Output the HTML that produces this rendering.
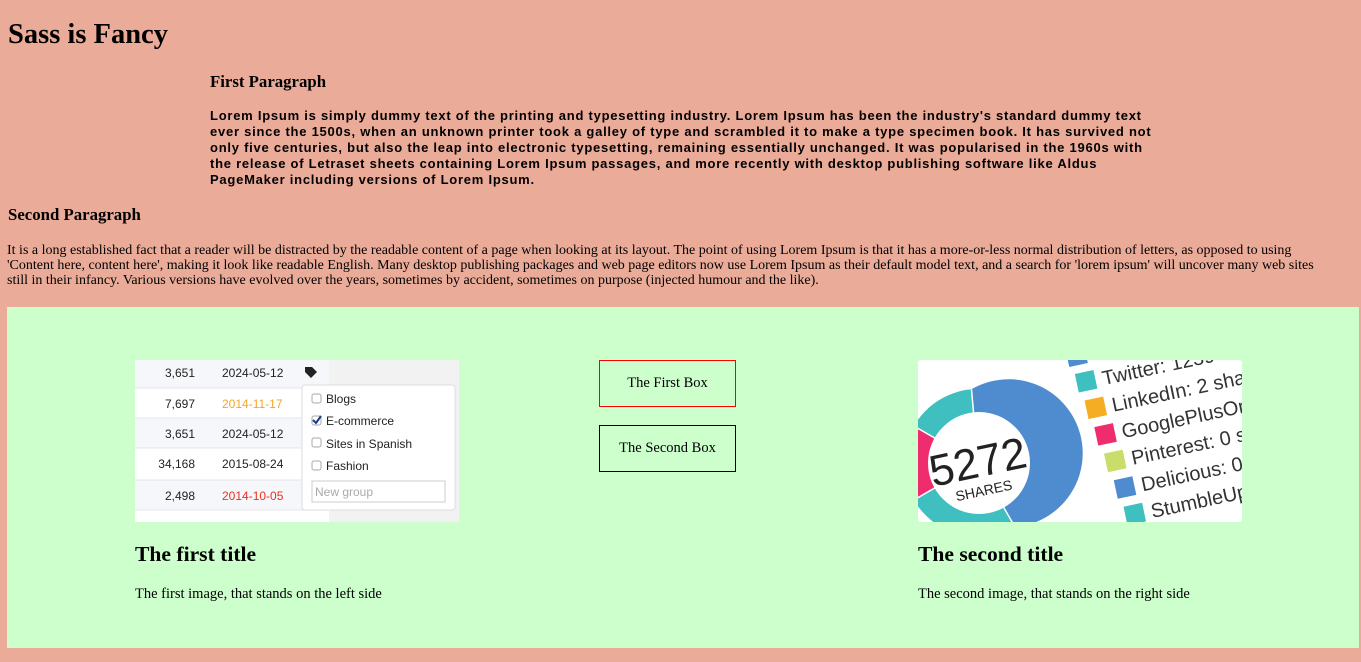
<!DOCTYPE html>
<html><head><meta charset="utf-8"><style>
*{margin:0;padding:0;box-sizing:border-box}
body{width:1361px;height:662px;background:#eaab98;font-family:"Liberation Serif",serif;position:relative;overflow:hidden;color:#000}
.a{position:absolute}
h1{font-size:28.5px;left:8px;top:19px}
h3{font-size:16.8px}
.p1{left:210px;top:108px;width:955px;font:bold 13px/16px "Liberation Sans",sans-serif;letter-spacing:0.75px}
.p2{left:7px;top:243px;width:1352px;font-size:14px;line-height:15px;white-space:nowrap}
.green{left:7px;top:307px;width:1352px;height:341px;background:#ccffcc}
.box{width:137px;height:47px;border:1px solid;font-size:14.5px;display:flex;align-items:center;justify-content:center;left:599px}
h2{font-size:21.6px}
.cap{font-size:14.5px}
</style></head><body>
<h1 class="a">Sass is Fancy</h1>
<h3 class="a" style="left:210px;top:72px">First Paragraph</h3>
<div class="a p1">Lorem Ipsum is simply dummy text of the printing and typesetting industry. Lorem Ipsum has been the industry's standard dummy text ever since the 1500s, when an unknown printer took a galley of type and scrambled it to make a type specimen book. It has survived not only five centuries, but also the leap into electronic typesetting, remaining essentially unchanged. It was popularised in the 1960s with the release of Letraset sheets containing Lorem Ipsum passages, and more recently with desktop publishing software like Aldus PageMaker including versions of Lorem Ipsum.</div>
<h3 class="a" style="left:8px;top:205px">Second Paragraph</h3>
<div class="a p2">It is a long established fact that a reader will be distracted by the readable content of a page when looking at its layout. The point of using Lorem Ipsum is that it has a more-or-less normal distribution of letters, as opposed to using<br>'Content here, content here', making it look like readable English. Many desktop publishing packages and web page editors now use Lorem Ipsum as their default model text, and a search for 'lorem ipsum' will uncover many web sites<br>still in their infancy. Various versions have evolved over the years, sometimes by accident, sometimes on purpose (injected humour and the like).</div>
<div class="a green"></div>

<svg class="a" style="left:135px;top:360px" width="324" height="162" viewBox="0 0 324 162" font-family="Liberation Sans,sans-serif" font-size="12">
<rect width="324" height="162" fill="#fff"/>
<rect width="194" height="28" fill="#f6f7fa"/>
<rect y="58" width="194" height="30" fill="#f6f7fa"/>
<rect y="120" width="194" height="30" fill="#f6f7fa"/>
<rect x="194" width="130" height="162" fill="#f2f2f2"/>
<g stroke="#e6e6ea"><line x1="0" y1="28" x2="194" y2="28"/><line x1="0" y1="58" x2="194" y2="58"/><line x1="0" y1="88" x2="194" y2="88"/><line x1="0" y1="120" x2="194" y2="120"/><line x1="0" y1="150" x2="194" y2="150"/></g>
<g fill="#222" text-anchor="end"><text x="60" y="17">3,651</text><text x="60" y="48">7,697</text><text x="60" y="78">3,651</text><text x="60" y="108">34,168</text><text x="60" y="140">2,498</text></g>
<text x="87" y="17" fill="#222">2024-05-12</text><text x="87" y="48" fill="#f5a623">2014-11-17</text><text x="87" y="78" fill="#222">2024-05-12</text><text x="87" y="108" fill="#222">2015-08-24</text><text x="87" y="140" fill="#e8321e">2014-10-05</text>
<path d="M170 7h7l5 5-6 6-6-6z" fill="#222"/>
<rect x="167" y="25" width="153" height="125" rx="3" fill="#fff" stroke="#ddd"/>
<g fill="#fff" stroke="#aaa"><rect x="177" y="34" width="9" height="9" rx="2"/><rect x="177" y="56" width="9" height="9" rx="2"/><rect x="177" y="78" width="9" height="9" rx="2"/><rect x="177" y="101" width="9" height="9" rx="2"/></g>
<path d="M178 60l3 3 5-7" stroke="#1a3a8a" stroke-width="2" fill="none"/>
<g fill="#222"><text x="191" y="43">Blogs</text><text x="191" y="65">E-commerce</text><text x="191" y="88">Sites in Spanish</text><text x="191" y="110">Fashion</text></g>
<rect x="177" y="121" width="133" height="21" fill="#fff" stroke="#ccc"/>
<text x="180" y="136" fill="#aaa">New group</text>
</svg>

<div class="a box" style="top:360px;border-color:#f00">The First Box</div>
<div class="a box" style="top:425px;border-color:#000">The Second Box</div>

<svg class="a" style="left:918px;top:360px" width="324" height="162" viewBox="0 0 324 162" font-family="Liberation Sans,sans-serif">
<defs><clipPath id="c"><rect width="324" height="162" rx="3"/></clipPath></defs>
<g clip-path="url(#c)">
<rect width="324" height="162" fill="#fff"/>
<path d="M60 103 L53.5 29.3 A74 74 0 1 1 97 167 Z" fill="#4e8bcf"/>
<path d="M60 103 L97 167 A74 74 0 0 1 -4.1 140 Z" fill="#3fbfbf"/>
<path d="M60 103 L-4.1 140 A74 74 0 0 1 -4.1 66 Z" fill="#ef2d6e"/>
<path d="M60 103 L-4.1 66 A74 74 0 0 1 53.5 29.3 Z" fill="#3fbfbf"/>
<g stroke="#fff" stroke-width="1.5"><line x1="60" y1="103" x2="53.5" y2="29.3"/><line x1="60" y1="103" x2="97" y2="167"/><line x1="60" y1="103" x2="-4.1" y2="140"/><line x1="60" y1="103" x2="-4.1" y2="66"/></g>
<circle cx="61" cy="103" r="51" fill="#fff"/>
<g transform="rotate(-12 60 103)"><text x="60" y="117" font-size="44" text-anchor="middle" fill="#222">5272</text><text x="60" y="136" font-size="14" text-anchor="middle" fill="#222">SHARES</text></g>
<g transform="rotate(-12 160 0)" font-size="20" fill="#333">
<rect x="150" y="-14" width="19" height="19" fill="#4e8bcf"/>
<rect x="154" y="13" width="19" height="19" fill="#3fbfbf"/><text x="180" y="30">Twitter: 1239</text>
<rect x="158" y="41" width="19" height="19" fill="#f5ae23"/><text x="184" y="58">LinkedIn: 2 shares</text>
<rect x="162" y="69" width="19" height="19" fill="#ef2d6e"/><text x="188" y="86">GooglePlusOne: 0</text>
<rect x="166" y="97" width="19" height="19" fill="#c9dd6a"/><text x="192" y="114">Pinterest: 0 shares</text>
<rect x="170" y="125" width="19" height="19" fill="#4e8bcf"/><text x="196" y="142">Delicious: 0 shares</text>
<rect x="174" y="153" width="19" height="19" fill="#3fbfbf"/><text x="200" y="170">StumbleUpon</text>
</g></g>
</svg>

<h2 class="a" style="left:135px;top:542px">The first title</h2>
<div class="a cap" style="left:135px;top:586px">The first image, that stands on the left side</div>
<h2 class="a" style="left:918px;top:542px">The second title</h2>
<div class="a cap" style="left:918px;top:586px">The second image, that stands on the right side</div>
</body></html>
